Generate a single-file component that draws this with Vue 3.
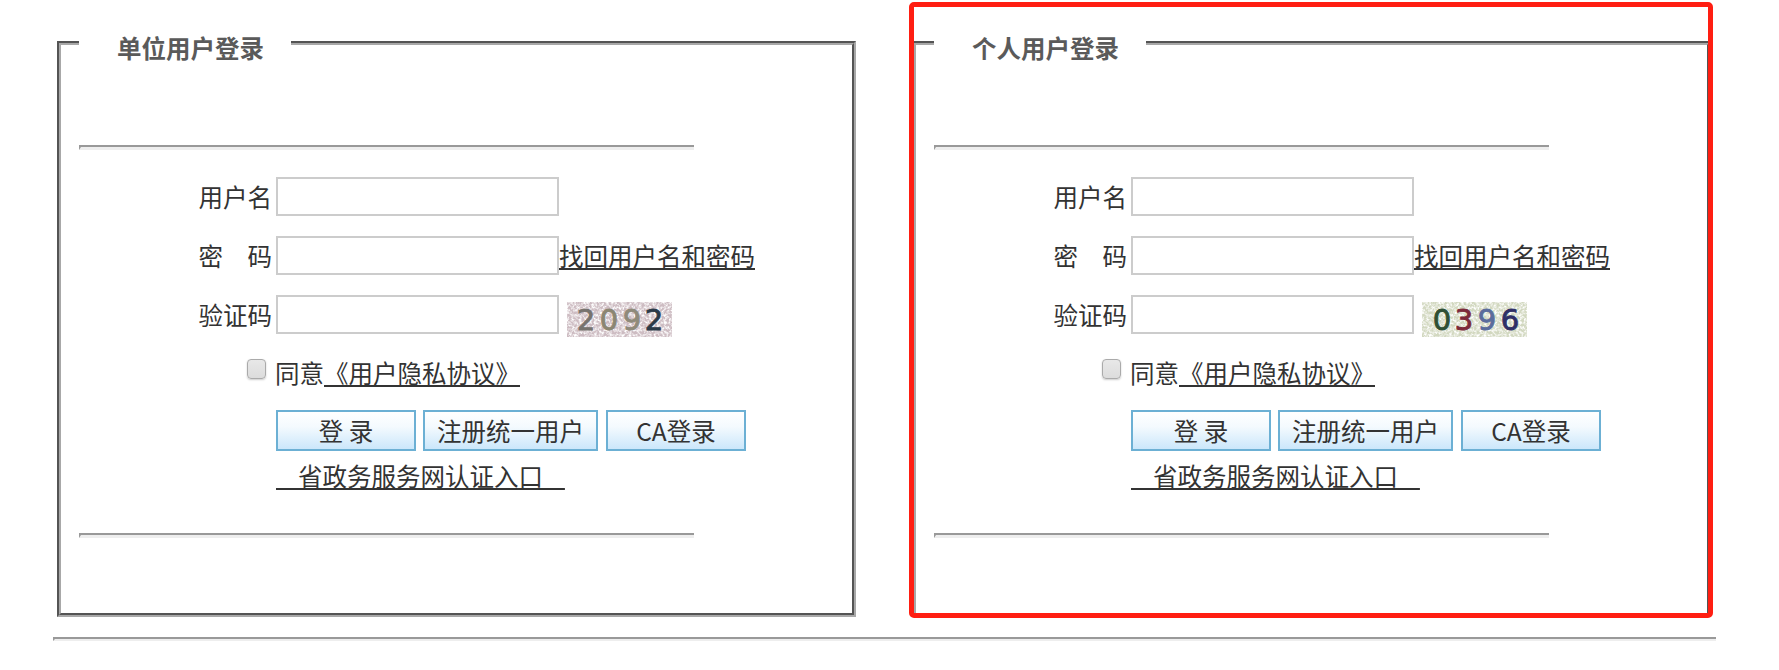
<script setup>
const panels = [
  {
    id: 'org',
    title: '单位用户登录',
    highlighted: false,
    tint: '#cdbcc2',
    digits: [
      { ch: '2', x: 19, fill: '#77736e' },
      { ch: '0', x: 42, fill: '#8b8672' },
      { ch: '9', x: 65, fill: '#8f8a7a' },
      { ch: '2', x: 87, fill: '#2b3a48' }
    ]
  },
  {
    id: 'person',
    title: '个人用户登录',
    highlighted: true,
    tint: '#d2d8c0',
    digits: [
      { ch: '0', x: 20, fill: '#2f5034' },
      { ch: '3', x: 42, fill: '#7c2a3a' },
      { ch: '9', x: 65, fill: '#5a6c9c' },
      { ch: '6', x: 88, fill: '#2f2f66' }
    ]
  }
]
</script>

<template>
  <div class="page">
    <div class="panels">
      <div v-for="p in panels" :key="p.id" class="panel">
        <fieldset class="box">
          <legend class="box-title">{{ p.title }}</legend>
          <hr class="rule rule-top" />
          <div class="form">
            <div class="row">
              <label class="row-label">用户名</label>
              <input class="field" type="text" />
            </div>
            <div class="row">
              <label class="row-label">密　码</label>
              <input class="field" type="password" />
              <a class="link" href="#">找回用户名和密码</a>
            </div>
            <div class="row">
              <label class="row-label">验证码</label>
              <input class="field" type="text" />
              <svg class="captcha" width="105" height="35" viewBox="0 0 105 35">
                <defs>
                  <filter :id="'noise-' + p.id" x="0" y="0" width="100%" height="100%">
                    <feTurbulence type="fractalNoise" baseFrequency="0.4" numOctaves="3" seed="7" />
                    <feColorMatrix type="matrix" values="0 0 0 0 1  0 0 0 0 1  0 0 0 0 1  2.6 0 0 0 -0.95" />
                  </filter>
                </defs>
                <rect width="105" height="35" :fill="p.tint" />
                <rect width="105" height="35" :filter="'url(#noise-' + p.id + ')'" />
                <text
                  v-for="(d, i) in p.digits"
                  :key="i"
                  class="captcha-digit"
                  :x="d.x"
                  y="28"
                  :fill="d.fill"
                  :stroke="d.fill"
                >{{ d.ch }}</text>
              </svg>
            </div>
            <div class="row-agree">
              <input class="agree-box" type="checkbox" />
              <span>同意</span><a class="link" href="#">《用户隐私协议》</a>
            </div>
            <div class="actions">
              <button class="btn btn-login" type="button">登 录</button>
              <button class="btn btn-register" type="button">注册统一用户</button>
              <button class="btn btn-ca" type="button">CA登录</button>
            </div>
            <div class="row-portal">
              <a class="link" href="#">&nbsp;&nbsp;&nbsp;&nbsp;省政务服务网认证入口&nbsp;&nbsp;&nbsp;&nbsp;</a>
            </div>
          </div>
          <hr class="rule rule-bottom" />
        </fieldset>
        <div v-if="p.highlighted" class="highlight"></div>
      </div>
    </div>
    <hr class="rule rule-page" />
  </div>
</template>

<style scoped>
.page {
  width: 1779px;
  height: 670px;
  padding: 22px 0 0 57px;
  box-sizing: border-box;
  overflow: hidden;
  background: #fff;
  font-family: "Noto Sans CJK SC", "Liberation Sans", sans-serif;
  font-size: 24.5px;
  color: #333;
}
.panels {
  display: flex;
  gap: 56px;
}
.panel {
  position: relative;
  width: 799px;
}
.box {
  box-sizing: border-box;
  width: 799px;
  height: 595px;
  margin: 0;
  padding: 0 18px;
  min-width: 0;
  border: 4px groove #a8a8a8;
}
.box-title {
  padding: 12px 27px 2px 38px;
  font-size: 24.5px;
  line-height: 28px;
  font-weight: 700;
  color: #5a5a5a;
}
.rule {
  box-sizing: border-box;
  height: 5px;
  margin: 0;
  border: 0;
  border-top: 2px solid #999;
  border-left: 2px solid #999;
  border-bottom: 3px solid #eee;
  background: #fff;
}
.rule-top {
  width: 615px;
  margin-top: 81px;
}
.rule-bottom {
  width: 615px;
  margin-top: 35px;
}
.rule-page {
  width: 1663px;
  height: 4px;
  border-bottom-width: 2px;
  margin: 20px 0 0 -4px;
}
.form {
  padding-top: 27px;
}
.row {
  display: flex;
  align-items: center;
  height: 39px;
  margin-bottom: 20px;
  line-height: 39px;
}
.row-label {
  box-sizing: border-box;
  width: 197px;
  padding-right: 4px;
  text-align: right;
}
.field {
  box-sizing: border-box;
  width: 283px;
  height: 39px;
  margin: 0;
  padding: 0 6px;
  border: 2px solid #ccc;
  background: #fff;
  outline: none;
}
.link {
  color: #333;
  text-decoration: underline;
  white-space: pre;
}
.captcha {
  display: block;
  margin: 9px 0 0 8px;
  flex: none;
}
.captcha-digit {
  font-family: "DejaVu Sans", sans-serif;
  font-size: 29px;
  text-anchor: middle;
  stroke-width: 0.9px;
}
.row-agree {
  display: flex;
  align-items: center;
  height: 40px;
  padding-left: 196px;
  position: relative;
  line-height: 40px;
  margin-top: -1px;
}
.agree-box {
  appearance: none;
  position: absolute;
  left: 168px;
  top: 6px;
  box-sizing: border-box;
  width: 19px;
  height: 20px;
  margin: 0;
  border: 1px solid #aaa;
  border-radius: 4px;
  background: linear-gradient(#e8e8e8, #dcdcdc);
  box-shadow: 0 1px 2px #ccc;
}
.actions {
  display: flex;
  margin-top: 17px;
  padding-left: 197px;
}
.btn {
  box-sizing: border-box;
  height: 41px;
  margin: 0;
  padding: 0;
  border: 2px solid #6cb0d4;
  background: linear-gradient(#ffffff 0%, #f4fafe 40%, #cbe7fb 100%);
  font-family: inherit;
  font-size: 24.5px;
  line-height: 37px;
  color: #333;
}
.btn-login {
  width: 140px;
  margin-right: 7px;
}
.btn-register {
  width: 175px;
  margin-right: 8px;
}
.btn-ca {
  width: 140px;
}
.row-portal {
  padding-left: 197px;
  margin-top: 3px;
  height: 44px;
  line-height: 44px;
}
.highlight {
  position: absolute;
  left: -3px;
  top: -20px;
  width: 804px;
  height: 616px;
  box-sizing: border-box;
  border: 5px solid #ff1e12;
  border-radius: 5px;
  pointer-events: none;
}
</style>

<style>
html, body {
  margin: 0;
  background: #fff;
}
</style>
